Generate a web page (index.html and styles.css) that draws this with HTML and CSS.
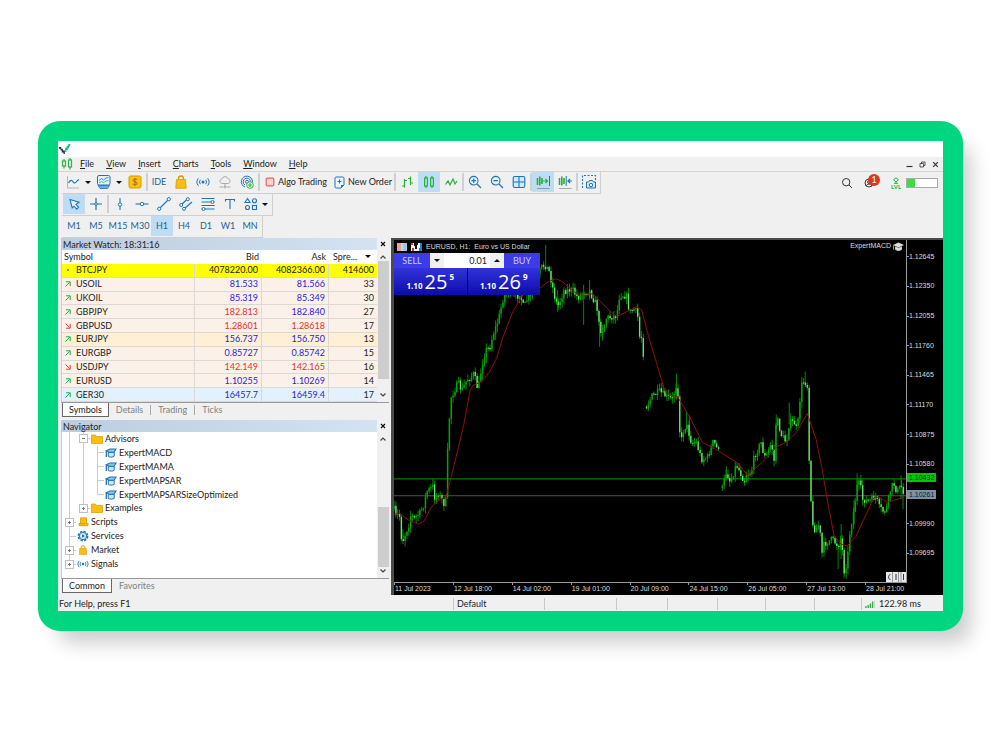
FILE: index.html
```
<!DOCTYPE html>
<html lang="en">
<head>
<meta charset="utf-8">
<meta name="viewport" content="width=device-width, initial-scale=1">
<title>Trading terminal</title>
<link rel="stylesheet" href="styles.css">
</head>
<body>
<svg class="sprite" aria-hidden="true">
  <symbol id="i-cap" viewBox="0 0 12 10"><path d="M3.200 4.500v3.800c2 1.200 4.300 1 6 0V4.500z" fill="#cfe6f7" stroke="#1f74b8"/><path d="M1.200 2.800 5 1h6L9 4.300H4z" fill="#8cc4ea" stroke="#1f74b8" stroke-width="1.100"/><path d="M1.300 3v6" stroke="#1f74b8" stroke-width="1.300"/></symbol>
  <symbol id="i-folder" viewBox="0 0 12 10"><path d="M.5 1h4l1 1.500h6V9.500H.5z" fill="#fac010" stroke="#d99a00" stroke-width=".7"/></symbol>
  <symbol id="i-bag" viewBox="0 0 14 14"><path d="M4.500 5V3.500a2.500 2.500 0 0 1 5 0V5" fill="none" stroke="#d99a00" stroke-width="1.300"/><path d="M2.500 4.500h9l.7 8.700H1.800z" fill="#fdbf0f" stroke="#d99a00" stroke-width=".8"/></symbol>
  <symbol id="i-signal" viewBox="0 0 14 14"><g fill="none" stroke="#1f74b8"><path d="M4.300 4.800a3.600 3.600 0 0 0 0 4.400M9.700 4.800a3.600 3.600 0 0 1 0 4.400M2.400 3.300a5.800 5.800 0 0 0 0 7.400M11.600 3.300a5.800 5.800 0 0 1 0 7.400"/></g><circle cx="7" cy="7" r="1.500" fill="#1f74b8"/></symbol>
  <symbol id="i-up" viewBox="0 0 8 8"><path d="M1.500 6.500 5.500 2.500M2 1.800h4.200V6" fill="none" stroke="#1ea84a"/></symbol>
  <symbol id="i-down" viewBox="0 0 8 8"><path d="M1.500 1.500 5.500 5.500M2 6.200h4.200V2" fill="none" stroke="#e23b36"/></symbol>
  <symbol id="i-chevup" viewBox="0 0 8 8"><path d="M1.500 5.500 4 3l2.500 2.500" fill="none" stroke="#444" stroke-width="1.200"/></symbol>
  <symbol id="i-chevdown" viewBox="0 0 8 8"><path d="M1.500 2.500 4 5l2.500-2.500" fill="none" stroke="#444" stroke-width="1.200"/></symbol>
  <symbol id="i-close" viewBox="0 0 8 8"><path d="M2 2l4 4M6 2 2 6" fill="none" stroke="#111" stroke-width="1.200"/></symbol>
</svg>

<main class="stage">
<div class="frame">
<div class="app">
  <header class="titlebar">
    <svg class="logo" width="14" height="14" viewBox="0 0 14 14"><path d="M1 6h2.200v1.700h1.600v1.800h2V13H5.500v-1.500H3.800V9.500H2.500V7.800H1z" fill="#13294b"/><path d="M7.200 11V6.500h1.600V4.800h1.500V3h1.900v2.500h-1.200v1.800H9.700V9H8.500v2z" fill="#10b981"/></svg>
  </header>

  <nav class="menubar">
    <svg class="menu-logo" width="12" height="12" viewBox="0 0 12 12"><g fill="none" stroke="#2fb344" stroke-width="1.200"><path d="M3 1v2M3 8v2.500M9 0v2M9 9v2.500"/><rect x="1.500" y="3" width="3" height="5"/><rect x="7.500" y="2" width="3" height="7"/></g></svg>
    <ul class="menu">
      <li><a href="#"><u>F</u>ile</a></li>
      <li><a href="#"><u>V</u>iew</a></li>
      <li><a href="#"><u>I</u>nsert</a></li>
      <li><a href="#"><u>C</u>harts</a></li>
      <li><a href="#"><u>T</u>ools</a></li>
      <li><a href="#"><u>W</u>indow</a></li>
      <li><a href="#"><u>H</u>elp</a></li>
    </ul>
    <div class="window-controls">
      <button aria-label="Minimize"><svg width="9" height="9" viewBox="0 0 9 9"><path d="M1.500 6.500h6" stroke="#333" stroke-width="1.200"/></svg></button>
      <button aria-label="Restore"><svg width="9" height="9" viewBox="0 0 9 9"><path d="M2 3.500h3.500V7H2zM3.500 3.500V2H7v3.500H5.500" fill="none" stroke="#333" stroke-width=".8"/></svg></button>
      <button aria-label="Close"><svg width="9" height="9" viewBox="0 0 9 9"><path d="M2.200 2.200l4.600 4.600M6.800 2.200 2.200 6.800" stroke="#333" stroke-width="1.200"/></svg></button>
    </div>
  </nav>

  <div class="toolbar-row">
    <div class="toolbar">
      <button class="tool drop" aria-label="Line chart"><svg width="16" height="16" viewBox="0 0 16 16"><path d="M2.500 2v12H14" fill="none" stroke="#b5b5b5"/><path d="M3.500 9c2-3.500 3.500-3 4.500-1.200s2.500 1.700 4.500-1.300l1.500-1" fill="none" stroke="#1f74b8" stroke-width="1.200"/></svg><i class="caret"></i></button>
      <button class="tool drop" aria-label="Indicators"><svg width="16" height="16" viewBox="0 0 16 16"><rect x="1.500" y="1.500" width="12.500" height="9.500" rx="1.500" fill="#e3f1fb" stroke="#1f74b8"/><path d="M3 6.500 5.500 4.500l2 1.500L10 4l2.500-.5" fill="none" stroke="#1f74b8" stroke-width=".8"/><path d="M3 9 5.500 7.500l2 1L10 7l2.500-.5" fill="none" stroke="#2fb344" stroke-width=".8"/><path d="M2 11.500 4 14.500h7.500l2-3z" fill="#6aaede" stroke="#1f74b8" stroke-width=".8"/></svg><i class="caret"></i></button>
      <button class="tool" aria-label="Market"><svg width="14" height="14" viewBox="0 0 14 14"><rect x="1" y="1" width="12" height="12" rx="1.500" fill="#fdc010" stroke="#d99a00"/><path d="M9.200 4.600c-.8-.9-4-.9-4 .8 0 1.900 4 1 4 3 0 1.700-3.300 1.700-4.300.6M7 3v8" fill="none" stroke="#a86f00"/></svg></button>
      <span class="sep"></span>
      <button class="tool text">IDE</button>
      <button class="tool" aria-label="Store"><svg width="14" height="14"><use href="#i-bag"/></svg></button>
      <button class="tool" aria-label="Signals"><svg width="14" height="14"><use href="#i-signal"/></svg></button>
      <button class="tool" aria-label="Cloud"><svg width="14" height="14" viewBox="0 0 14 14"><g fill="none" stroke="#aaa"><path d="M3.500 8.500a2.300 2.300 0 0 1 .2-4.400 3.500 3.500 0 0 1 6.600-.2 2.400 2.400 0 0 1 .2 4.600zM7 8.500v3M1.500 12h4M8.500 12h4"/><circle cx="7" cy="12" r="1"/></g></svg></button>
      <button class="tool" aria-label="Virtual hosting"><svg width="14" height="14" viewBox="0 0 14 14"><g fill="none" stroke="#1f74b8"><path d="M5 12A5.600 5.600 0 1 1 12.500 7"/><path d="M5 10A3.700 3.700 0 1 1 10.600 6.500"/><circle cx="7" cy="6.800" r="1.500"/></g><circle cx="10" cy="10" r="3.300" fill="#fff" stroke="#2fb344"/><path d="M8 10h4M10 8v4" stroke="#2fb344" stroke-width="1.200"/></svg></button>
      <span class="sep"></span>
      <button class="tool label algo"><svg width="10" height="10" viewBox="0 0 10 10"><rect x="1.200" y="1.200" width="7.600" height="7.600" rx="1" fill="#fbd3d3" stroke="#e06666" stroke-width="1.200"/></svg>Algo Trading</button>
      <button class="tool label order"><svg width="11" height="13" viewBox="0 0 11 13"><path d="M1 2.200C1 1.500 1.500 1 2.200 1h6.600c.7 0 1.200.5 1.200 1.200V9L7 12H2.200C1.500 12 1 11.500 1 10.800z" fill="#eaf5fd" stroke="#1f74b8"/><path d="M10 9H7v3z" fill="#1f74b8"/><path d="M5.500 3.500v4M3.500 5.500h4" stroke="#1f74b8"/></svg>New Order</button>
      <span class="sep"></span>
      <button class="tool" aria-label="Bar chart"><svg width="14" height="14" viewBox="0 0 14 14"><path d="M4.500 4v8.500M2 11h2.500M4.500 5.500H7M10.500 1.500V10M8 3.500h2.500M10.500 8H13" fill="none" stroke="#22b33c" stroke-width="1.200"/></svg></button>
      <button class="tool active" aria-label="Candlesticks"><svg width="14" height="14" viewBox="0 0 14 14"><g fill="none" stroke="#22b33c" stroke-width="1.200"><path d="M4 1v2M4 11v2M10 1v2M10 11v2"/><rect x="2.600" y="3" width="2.800" height="8"/><rect x="8.600" y="3" width="2.800" height="8"/></g></svg></button>
      <button class="tool" aria-label="Line"><svg width="14" height="14" viewBox="0 0 14 14"><path d="M1.500 9.500 4 6l2 4 3-6 2 5 2-3" fill="none" stroke="#22b33c" stroke-width="1.200"/></svg></button>
      <span class="sep"></span>
      <button class="tool" aria-label="Zoom in"><svg width="14" height="14" viewBox="0 0 14 14"><circle cx="5.700" cy="5.700" r="4.300" fill="#e3f1fb" stroke="#1f74b8" stroke-width="1.100"/><path d="M9 9l4 4M3.500 5.700h4.400M5.700 3.500v4.400" stroke="#1f74b8" stroke-width="1.200"/></svg></button>
      <button class="tool" aria-label="Zoom out"><svg width="14" height="14" viewBox="0 0 14 14"><circle cx="5.700" cy="5.700" r="4.300" fill="#e3f1fb" stroke="#1f74b8" stroke-width="1.100"/><path d="M9 9l4 4M3.500 5.700h4.400" stroke="#1f74b8" stroke-width="1.200"/></svg></button>
      <button class="tool" aria-label="Tile windows"><svg width="14" height="14" viewBox="0 0 14 14"><rect x="1.200" y="1.500" width="11.600" height="11" rx="1.500" fill="#cfe8fa" stroke="#1f74b8" stroke-width="1.100"/><path d="M7 1.500v11M1.200 7h11.600" stroke="#1f74b8" stroke-width="1.100"/></svg></button>
      <span class="sep"></span>
      <button class="tool active" aria-label="Auto scroll"><svg width="16" height="16" viewBox="0 0 16 16"><path d="M2.500 4v7M4.800 2.500v9M7 4v6" stroke="#22b33c" stroke-width="1.600"/><path d="M8 7h4M10.500 5l2 2-2 2" fill="none" stroke="#22b33c" stroke-width="1.200"/><path d="M14.500 2v10" stroke="#1f74b8"/><path d="M2 14.500h12.500" stroke="#999"/></svg></button>
      <button class="tool" aria-label="Chart shift"><svg width="16" height="16" viewBox="0 0 16 16"><path d="M2.500 4v7M4.800 2.500v9M7 4v6" stroke="#22b33c" stroke-width="1.600"/><path d="M9.200 2v10" stroke="#1f74b8"/><path d="M15 7h-4M13 5l-2 2 2 2" fill="none" stroke="#1f74b8" stroke-width="1.200"/><path d="M2 14.500h12.500" stroke="#aaa"/></svg></button>
      <span class="sep"></span>
      <button class="tool" aria-label="Screenshot"><svg width="16" height="16" viewBox="0 0 16 16"><path d="M1.500 14V1.500h13V6" fill="none" stroke="#1f74b8" stroke-width="1.100" stroke-dasharray="2 1.500"/><path d="M5.500 8h2l1-1.500h3l1 1.500h2v6h-9z" fill="#cfe8fa" stroke="#1f74b8"/><circle cx="10" cy="11" r="1.700" fill="#fff" stroke="#1f74b8"/></svg></button>
    </div>
    <div class="account">
      <button class="tool" aria-label="Search"><svg width="12" height="12" viewBox="0 0 12 12"><circle cx="5.200" cy="5.200" r="3.700" fill="none" stroke="#333"/><path d="M8 8l3 3" stroke="#333"/></svg></button>
      <button class="tool user" aria-label="Notifications: 1"><svg width="10" height="10" viewBox="0 0 10 10"><circle cx="5" cy="5" r="4" fill="none" stroke="#333"/><path d="M2 8c1-2.500 5-2.500 6 0" fill="none" stroke="#333"/><circle cx="5" cy="4" r="1.400" fill="none" stroke="#333"/></svg><span class="badge">1</span></button>
      <span class="level"><svg width="8" height="7" viewBox="0 0 8 7"><path d="M4 .8 6.500 2.800 4 4.800 1.500 2.800zM4 4.800V6.500M2 6.300h4" fill="none" stroke="#22b33c"/></svg>LVL</span>
      <div class="gauge" role="meter" aria-label="Level" aria-valuenow="28" aria-valuemin="0" aria-valuemax="100"><span style="width:28%"></span></div>
    </div>
  </div>

  <div class="toolbar-row plain">
    <div class="toolbar">
      <button class="tool active" aria-label="Cursor"><svg width="14" height="14" viewBox="0 0 14 14"><path d="M3 2.500l9 2.800-3 2 2.600 3-1.800 1.800-2.800-2.900L5.200 11z" fill="#e6f3fc" stroke="#1f74b8" stroke-width="1.100"/></svg></button>
      <button class="tool" aria-label="Crosshair"><svg width="14" height="14" viewBox="0 0 14 14"><path d="M7 1v12M1 7h12" stroke="#1f74b8" stroke-width="1.200"/><circle cx="7" cy="7" r="1.300" fill="#f0f0f0" stroke="#1f74b8"/></svg></button>
      <span class="sep"></span>
      <button class="tool" aria-label="Vertical line"><svg width="14" height="14" viewBox="0 0 14 14"><path d="M7 1v12" stroke="#1f74b8" stroke-width="1.100"/><circle cx="7" cy="7.500" r="1.700" fill="#fff" stroke="#1f74b8"/></svg></button>
      <button class="tool" aria-label="Horizontal line"><svg width="14" height="14" viewBox="0 0 14 14"><path d="M.5 7h13" stroke="#1f74b8" stroke-width="1.100"/><circle cx="7" cy="7" r="1.700" fill="#fff" stroke="#1f74b8"/></svg></button>
      <button class="tool" aria-label="Trend line"><svg width="14" height="14" viewBox="0 0 14 14"><path d="M2 12 12 2" stroke="#1f74b8" stroke-width="1.100"/><circle cx="2.200" cy="11.800" r="1.600" fill="#fff" stroke="#1f74b8"/><circle cx="11.800" cy="2.200" r="1.600" fill="#fff" stroke="#1f74b8"/></svg></button>
      <button class="tool" aria-label="Channel"><svg width="14" height="14" viewBox="0 0 14 14"><path d="M2 8 9 1.500M5 12l8-7" stroke="#1f74b8" stroke-width="1.100"/><circle cx="2.200" cy="8" r="1.500" fill="#fff" stroke="#1f74b8"/><circle cx="8.800" cy="2.200" r="1.500" fill="#fff" stroke="#1f74b8"/><circle cx="5" cy="11.800" r="1.500" fill="#fff" stroke="#1f74b8"/></svg></button>
      <button class="tool" aria-label="Fibonacci"><svg width="14" height="14" viewBox="0 0 14 14"><path d="M.5 1.500h13M.5 5h13M.5 8.500h13M.5 12h13" stroke="#1f74b8" stroke-width="1.100"/><circle cx="11.500" cy="5" r="1.500" fill="#fff" stroke="#1f74b8"/><circle cx="2.500" cy="12" r="1.500" fill="#fff" stroke="#1f74b8"/></svg></button>
      <button class="tool" aria-label="Text"><svg width="14" height="14" viewBox="0 0 14 14"><path d="M2.500 4.500v-2h9v2M7 2.500V12" fill="none" stroke="#1f74b8" stroke-width="1.100"/></svg></button>
      <button class="tool drop" aria-label="Shapes"><svg width="14" height="14" viewBox="0 0 14 14"><g fill="none" stroke="#1f74b8" stroke-width="1.100"><path d="M3.500 1.500 6 5.500H1z"/><circle cx="10.500" cy="3.700" r="2"/><circle cx="3.500" cy="10.500" r="2"/><rect x="8.500" y="8.500" width="4" height="4"/></g></svg><i class="caret"></i></button>
    </div>
  </div>

  <div class="toolbar-row plain">
    <div class="toolbar periods">
      <button class="tool text">M1</button><button class="tool text">M5</button><button class="tool text">M15</button><button class="tool text">M30</button><button class="tool text active">H1</button><button class="tool text">H4</button><button class="tool text">D1</button><button class="tool text">W1</button><button class="tool text">MN</button>
    </div>
  </div>

  <div class="workspace">
    <aside class="side">
      <section class="panel">
        <header class="panel-title"><h2>Market Watch: 18:31:16</h2><button aria-label="Close Market Watch"><svg width="8" height="8"><use href="#i-close"/></svg></button></header>
        <div class="panel-body">
          <table class="quotes">
            <thead><tr><th class="sym">Symbol</th><th>Bid</th><th>Ask</th><th class="spread">Spre...<i class="caret"></i></th></tr></thead>
            <tbody>
              <tr class="hot"><td><i class="dot"></i>BTCJPY</td><td>4078220.00</td><td>4082366.00</td><td>414600</td></tr>
              <tr><td><svg width="8" height="8"><use href="#i-up"/></svg>USOIL</td><td class="up">81.533</td><td class="up">81.566</td><td>33</td></tr>
              <tr><td><svg width="8" height="8"><use href="#i-up"/></svg>UKOIL</td><td class="up">85.319</td><td class="up">85.349</td><td>30</td></tr>
              <tr><td><svg width="8" height="8"><use href="#i-up"/></svg>GBPJPY</td><td class="down">182.813</td><td class="up">182.840</td><td>27</td></tr>
              <tr><td><svg width="8" height="8"><use href="#i-down"/></svg>GBPUSD</td><td class="down">1.28601</td><td class="down">1.28618</td><td>17</td></tr>
              <tr class="warm"><td><svg width="8" height="8"><use href="#i-up"/></svg>EURJPY</td><td class="up">156.737</td><td class="up">156.750</td><td>13</td></tr>
              <tr><td><svg width="8" height="8"><use href="#i-up"/></svg>EURGBP</td><td class="up">0.85727</td><td class="up">0.85742</td><td>15</td></tr>
              <tr><td><svg width="8" height="8"><use href="#i-down"/></svg>USDJPY</td><td class="down">142.149</td><td class="down">142.165</td><td>16</td></tr>
              <tr><td><svg width="8" height="8"><use href="#i-up"/></svg>EURUSD</td><td class="up">1.10255</td><td class="up">1.10269</td><td>14</td></tr>
              <tr class="cool"><td><svg width="8" height="8"><use href="#i-up"/></svg>GER30</td><td class="up">16457.7</td><td class="up">16459.4</td><td>17</td></tr>
            </tbody>
          </table>
          <div class="scroll market-scroll"><svg width="8" height="8"><use href="#i-chevup"/></svg><span class="thumb"></span><svg width="8" height="8"><use href="#i-chevdown"/></svg></div>
        </div>
        <div class="tabs"><button class="tab current">Symbols</button><button class="tab">Details</button><button class="tab">Trading</button><button class="tab">Ticks</button></div>
      </section>

      <section class="panel">
        <header class="panel-title"><h2>Navigator</h2><button aria-label="Close Navigator"><svg width="8" height="8"><use href="#i-close"/></svg></button></header>
        <div class="panel-body">
          <ul class="tree">
            <li><i class="g line"></i><i class="g tee box minus"></i><svg width="12" height="10"><use href="#i-folder"/></svg>Advisors</li>
            <li><i class="g line"></i><i class="g line"></i><i class="g tee"></i><svg width="12" height="10"><use href="#i-cap"/></svg>ExpertMACD</li>
            <li><i class="g line"></i><i class="g line"></i><i class="g tee"></i><svg width="12" height="10"><use href="#i-cap"/></svg>ExpertMAMA</li>
            <li><i class="g line"></i><i class="g line"></i><i class="g tee"></i><svg width="12" height="10"><use href="#i-cap"/></svg>ExpertMAPSAR</li>
            <li><i class="g line"></i><i class="g line"></i><i class="g tee last"></i><svg width="12" height="10"><use href="#i-cap"/></svg>ExpertMAPSARSizeOptimized</li>
            <li><i class="g line"></i><i class="g tee last box"></i><svg width="12" height="10"><use href="#i-folder"/></svg>Examples</li>
            <li><i class="g tee box"></i><svg width="12" height="10" viewBox="0 0 12 10"><path d="M3.500.8h6v5.700H11v2.200H2V6.500h1.500z" fill="#fdbf0f" stroke="#d99a00" stroke-width=".8"/><path d="M2 6.700h6.500" stroke="#d99a00"/></svg>Scripts</li>
            <li><i class="g tee"></i><svg width="12" height="12" viewBox="0 0 12 12"><circle cx="6" cy="6" r="4.600" fill="none" stroke="#1f74b8" stroke-width="1.600" stroke-dasharray="2.400 1.200"/><circle cx="6" cy="6" r="3.700" fill="#d6ebfa" stroke="#1f74b8"/><path d="M5 4.200 8 6 5 7.800z" fill="#1f74b8"/></svg>Services</li>
            <li><i class="g tee box"></i><svg width="12" height="10"><use href="#i-bag"/></svg>Market</li>
            <li><i class="g tee last box"></i><svg width="12" height="12"><use href="#i-signal"/></svg>Signals</li>
          </ul>
          <div class="scroll nav-scroll"><svg width="8" height="8"><use href="#i-chevup"/></svg><span class="thumb"></span><svg width="8" height="8"><use href="#i-chevdown"/></svg></div>
        </div>
        <div class="tabs"><button class="tab current">Common</button><button class="tab">Favorites</button></div>
      </section>
    </aside>

    <section class="chart" aria-label="EURUSD, H1">
      <div class="plot">
        <svg class="series" viewBox="394 240 513 343" preserveAspectRatio="none">
          <path d="M394 479.500h513" stroke="#007c00" stroke-width="1.200"/>
          <path d="M394 496.500h513" stroke="#505254" stroke-width="1.200"/>
          <path id="wicks" stroke="#009800" stroke-width=".9" fill="none"/>
          <path id="rising" stroke="#0aa00a" stroke-width="1.500" fill="none"/>
          <path id="falling" stroke="#6fdc6f" stroke-width="1.400" fill="none"/>
          <path id="average" stroke="#8e1208" stroke-width="1" fill="none" stroke-linejoin="round"/>
        </svg>
        <div class="chart-head">
          <svg width="10" height="8" viewBox="0 0 10 8"><rect width="10" height="8" fill="#eee"/><path d="M0 1h4.500M0 3h4.500M0 5h4.500M0 7h4.500" stroke="#d8574c" stroke-width="1"/><path d="M5.500 1H10M5.500 3H10M5.500 5H10M5.500 7H10" stroke="#5a9fd0"/></svg>
          <svg width="11" height="8" viewBox="0 0 11 8"><rect width="11" height="8" fill="#f4f4f4"/><path d="M0 0h2v2H0zM1 5h2v3H1z" fill="#c33"/><path d="M3 0h4v2H6v4H4V3H3z" fill="#111"/><path d="M9 0h2v8H8V5h1z" fill="#2a7ab8"/></svg>
          <span>EURUSD, H1:&nbsp; Euro vs US Dollar</span>
          <span class="expert">ExpertMACD<svg width="11" height="9" viewBox="0 0 11 9"><path d="M0 3 5.500.5 11 3 5.500 5.500z" fill="#ddd"/><path d="M2.500 4.800v2.700c2 1.200 4 1.200 6 0V4.800l-3 1.500zM.6 3.500v4" fill="#ddd" stroke="#ddd" stroke-width=".8"/></svg></span>
        </div>
        <form class="deal">
          <div class="deal-top">
            <span class="side-name">SELL</span>
            <div class="lots"><button type="button" aria-label="Less"><i class="caret"></i></button><input aria-label="Volume" value="0.01"><button type="button" aria-label="More"><i class="caret flip"></i></button></div>
            <span class="side-name">BUY</span>
          </div>
          <div class="deal-prices">
            <button type="button" aria-label="Sell at 1.10255"><small>1.10</small><b>25</b><sup>5</sup></button>
            <button type="button" aria-label="Buy at 1.10269"><small>1.10</small><b>26</b><sup>9</sup></button>
          </div>
        </form>
        <svg class="stamp" width="20" height="10" viewBox="0 0 20 10"><rect width="20" height="10" fill="#e8e8e8"/><path d="M4.500 2.500a2 2.500 0 1 0 0 5" fill="none" stroke="#457" stroke-width="1"/><path d="M6.500 0v10M12.500 0v10M15 0v10" stroke="#999"/><path d="M10 2v6M17.500 2v6" stroke="#333"/></svg>
      </div>
      <div class="prices">
        <span>1.12645</span><span>1.12350</span><span>1.12055</span><span>1.11760</span><span>1.11465</span><span>1.11170</span><span>1.10875</span><span>1.10580</span><span>1.10285</span><span>1.09990</span><span>1.09695</span>
        <output class="mark order-mark">1.10432</output>
        <output class="mark bid-mark">1.10261</output>
      </div>
      <div class="times">
        <span>11 Jul 2023</span><span>12 Jul 18:00</span><span>14 Jul 02:00</span><span>19 Jul 01:00</span><span>20 Jul 09:00</span><span>24 Jul 15:00</span><span>26 Jul 05:00</span><span>27 Jul 13:00</span><span>28 Jul 21:00</span>
      </div>
    </section>
  </div>

  <footer class="status">
    <span class="help">For Help, press F1</span>
    <span class="profile">Default</span>
    <span></span><span></span><span></span><span></span><span></span><span></span>
    <span class="ping"><svg width="10" height="8" viewBox="0 0 10 8"><path d="M1 6v2M3.200 5v3M5.400 3.500V8M7.600 1.500V8" stroke="#2fb344" stroke-width="1.400"/><path d="M9.500 1v7" stroke="#9c9" stroke-width=".6"/></svg>122.98 ms</span>
  </footer>
</div>
</div>
</main>
<script src="chart.js"></script>
</body>
</html>
```

FILE: styles.css
```
* { box-sizing: border-box; }

body {
  margin: 0;
  background: #fff;
  color: #222;
  font: 9px/12px Lato, "Open Sans", sans-serif;
}

button {
  margin: 0;
  padding: 0;
  border: 0;
  background: none;
  color: inherit;
  font: inherit;
  white-space: nowrap;
}

ul { margin: 0; padding: 0; list-style: none; }
a { color: inherit; text-decoration: none; }
svg { display: block; flex: none; }
.sprite { display: none; }

.stage { padding: 121px 38px; }

.frame {
  padding: 20px;
  border-radius: 22px;
  background: #00d67f;
  box-shadow: 14px 18px 20px -6px rgba(0, 0, 0, .2);
}

.app {
  display: flex;
  flex-direction: column;
  background: #f0f0f0;
}

.caret {
  flex: none;
  width: 0;
  height: 0;
  border: 3px solid transparent;
  border-top-color: #111;
  border-bottom: 0;
}

.caret.flip {
  border-top: 0;
  border-bottom: 3px solid #111;
}

/* title and menu */
.titlebar { height: 16px; background: #fff; }

.menubar {
  display: flex;
  align-items: center;
  height: 15px;
  padding: 0 3px;
  border-bottom: 1px solid #d4d4d4;
}

.menu { display: flex; gap: 12px; margin-left: 7px; }
.window-controls { display: flex; gap: 4px; margin-left: auto; }

/* toolbars */
.toolbar-row {
  display: flex;
  justify-content: space-between;
  height: 22px;
  padding-left: 4px;
}

.toolbar {
  display: flex;
  border-right: 1px solid #cfcfcf;
  border-bottom: 1px solid #cfcfcf;
}

.plain .toolbar { padding-left: 1px; }
.periods { padding-right: 1px; }

.tool {
  position: relative;
  display: flex;
  align-items: center;
  justify-content: center;
  width: 22px;
  height: 20px;
}

.tool.active { background: #bfdcf5; }
.tool.text { color: #1c5f96; }
.tool.drop { justify-content: flex-start; gap: 4px; width: 31px; padding-left: 3px; }
.tool.label { justify-content: flex-start; gap: 3px; padding-left: 5px; }
.tool.algo { width: 73px; }
.tool.order { width: 61px; padding-left: 1px; }

.sep {
  width: 2px;
  height: 18px;
  margin-top: 1px;
  background: #d0d0d0;
}

.account {
  display: flex;
  align-items: center;
  padding-right: 5px;
}

.badge {
  position: absolute;
  top: 1px;
  right: 0;
  width: 12px;
  height: 12px;
  border-radius: 50%;
  background: #d93a20;
  color: #fff;
  text-align: center;
}

.level {
  display: flex;
  flex-direction: column;
  align-items: center;
  margin: 0 5px 0 11px;
  color: #22b33c;
  font-size: 6px;
  font-weight: 700;
  line-height: 6px;
}

.gauge {
  width: 32px;
  height: 10px;
  border: 1px solid #aaa;
  background: #fff;
}

.gauge span { display: block; height: 100%; background: #3fdc3f; }

/* workspace */
.workspace { display: flex; }

.side {
  display: flex;
  flex: none;
  flex-direction: column;
  gap: 3px;
  width: 333px;
  padding: 0 2px 2px 3px;
}

.panel-title {
  display: flex;
  align-items: center;
  justify-content: space-between;
  height: 12px;
  background: linear-gradient(90deg, #bccddf, #d5e3f2);
}

.panel-title h2 {
  margin: 0 0 0 2px;
  font-size: 9px;
  font-weight: 400;
  line-height: 11px;
}

.panel-title button { padding: 2px; background: #f0f0f0; }

.panel-body {
  display: flex;
  border-left: 1px solid #ccc;
  border-bottom: 1px solid #999;
  background: #fff;
}

.quotes {
  flex: 1;
  height: 152px;
  border-collapse: separate;
  border-spacing: 0;
  table-layout: fixed;
}

.quotes th {
  width: 67px;
  height: 14px;
  padding: 0 3px 0 0;
  font-weight: 400;
  line-height: 10px;
  text-align: right;
  white-space: nowrap;
}

.quotes .sym { width: 133px; padding-left: 2px; text-align: left; }
.quotes .spread { width: 48px; padding-right: 0; padding-left: 4px; text-align: left; }
.spread .caret { display: inline-block; margin: 0 0 2px 8px; }

.quotes td {
  padding: 0 3px 0 0;
  border-right: 1px solid #ddd8d4;
  border-bottom: 1px solid #ddd8d4;
  background: #fbf1e8;
  line-height: 10px;
  text-align: right;
}

.quotes td:first-child { padding-left: 14px; text-align: left; }
.quotes td:last-child { border-right: 0; }
.quotes td svg { float: left; margin: 1px 0 0 -12px; }
.quotes .hot td { background: #ff0; }
.quotes .warm td { background: #ffefd5; }
.quotes .cool td { background: #e2f1fd; }
.quotes .up { color: #2b22dd; }
.quotes .down { color: #e8302c; }

.dot {
  float: left;
  width: 2px;
  height: 2px;
  margin: 4px 0 0 -9px;
  background: #a80;
}

.scroll {
  display: flex;
  flex-direction: column;
  align-items: center;
  justify-content: space-between;
  width: 12px;
  padding: 3px 0;
  background: #f0f0f0;
}

.thumb { width: 11px; background: #cdcdcd; }
.market-scroll .thumb { height: 118px; margin: 0 0 auto; }
.nav-scroll .thumb { height: 60px; margin: auto 0 0; }

.tabs { display: flex; height: 14px; padding-left: 1px; }

.tab {
  margin: 2px 0;
  padding: 0 7px;
  border-right: 1px solid #aaa;
  color: #808080;
  line-height: 10px;
}

.tab:last-child { border-right: 0; }

.tab.current {
  margin: 0;
  padding: 0 6px;
  border: 1px solid #666;
  border-top: 0;
  background: #fff;
  color: #222;
}

/* navigator tree */
.tree {
  display: grid;
  flex: 1;
  grid-auto-rows: 1fr;
  height: 146px;
  padding-bottom: 7px;
}

.tree li { display: flex; align-items: center; }
.tree svg { margin: 0 2px 0 1px; }

.g {
  position: relative;
  align-self: stretch;
  width: 14px;
  background:
    linear-gradient(#ccc, #ccc) 7px 0 / 1px 100% no-repeat;
}

.g.tee {
  background:
    linear-gradient(#ccc, #ccc) 7px 0 / 1px 100% no-repeat,
    linear-gradient(#ccc, #ccc) 7px 50% / 7px 1px no-repeat;
}

.g.last {
  background:
    linear-gradient(#ccc, #ccc) 7px 0 / 1px 50% no-repeat,
    linear-gradient(#ccc, #ccc) 7px 50% / 7px 1px no-repeat;
}

.g.box { display: grid; place-items: center; }

.g.box::after {
  content: "";
  width: 7px;
  height: 7px;
  margin-left: 1px;
  border: 1px solid #b9c2cc;
  background:
    linear-gradient(#678, #678) 50% 50% / 3px 1px no-repeat,
    linear-gradient(#678, #678) 50% 50% / 1px 3px no-repeat,
    #fff;
}

.g.minus::after { background: linear-gradient(#678, #678) 50% 50% / 3px 1px no-repeat, #fff; }

/* chart */
.chart {
  display: grid;
  flex: 1;
  grid-template: 1fr 12px / 1fr 36px;
  min-width: 0;
  border-top: 2px solid #4a4c4e;
  border-left: 3px solid #4a4c4e;
  background: #000;
  color: #ddd;
  font: 7px/8px "Liberation Sans", Arial, sans-serif;
}

.plot {
  position: relative;
  min-height: 0;
  border-right: 1px solid #999;
  border-bottom: 1px solid #999;
}

.series { position: absolute; inset: 0; width: 100%; height: 100%; }

.chart-head {
  position: relative;
  display: flex;
  align-items: center;
  gap: 4px;
  padding: 2px 2px 2px 3px;
}

.chart-head span { white-space: pre; }
.chart-head .expert { display: flex; gap: 2px; margin-left: auto; }

.deal {
  position: relative;
  width: 146px;
  color: #fff;
  font-family: "Open Sans", "Noto Sans", sans-serif;
}

.deal-top {
  display: grid;
  grid-template-columns: 36px 74px 1fr;
  height: 15px;
  background: #3c3ce6;
}

.side-name { color: #c8ccff; font: 9px/15px Lato, "Open Sans", sans-serif; text-align: center; }

.lots { display: flex; background: #fff; color: #222; }
.lots button { display: grid; width: 14px; place-items: center; background: #f0f0f0; }

.lots input {
  flex: 1;
  min-width: 0;
  padding: 0 3px;
  border: 0;
  background: #fff;
  color: #222;
  font: 9px/14px Lato, "Open Sans", sans-serif;
  text-align: right;
}

.deal-prices { display: grid; grid-template-columns: 1fr 1fr; gap: 1px; }

.deal-prices button {
  display: flex;
  align-items: baseline;
  justify-content: center;
  gap: 2px;
  height: 27px;
  background: linear-gradient(#3232dc, #0c0cac);
  color: #fff;
}

.deal-prices small { font-size: 8px; font-weight: 700; }
.deal-prices b { font-size: 20px; font-weight: 400; line-height: 27px; }
.deal-prices sup { align-self: flex-start; font-size: 8px; font-weight: 700; line-height: 18px; }

.stamp { position: absolute; right: 0; bottom: 0; }

.prices {
  position: relative;
  display: grid;
  grid-auto-rows: 1fr;
  align-items: center;
  padding: 2px 0 15px;
}

.prices span { display: flex; align-items: center; }
.prices span::before { content: ""; width: 2px; height: 1px; background: #999; }

.mark {
  position: absolute;
  left: 0;
  width: 29px;
  padding-left: 2px;
  color: #022;
  line-height: 9px;
}

.order-mark { top: 68%; background: #00c800; }
.bid-mark { top: 73%; background: #8090a4; }

.times {
  display: grid;
  grid-column: 1 / -1;
  grid-template-columns: repeat(9, 1fr);
  padding-right: 19px;
}

.times span { border-left: 1px solid #999; height: 2px; padding-top: 2px; white-space: nowrap; }

/* status bar */
.status {
  display: grid;
  grid-template-columns: 395px 91px 72px 51px 50px 48px 49px 47px 1fr;
  align-items: center;
  height: 16px;
  padding-top: 2px;
}

.status span { height: 12px; padding-left: 3px; border-left: 1px solid #c8c8c8; white-space: nowrap; }
.status .help { padding-left: 1px; border: 0; }
.status .ping { display: flex; align-items: center; gap: 4px; }
```

FILE: chart.js
```
// Closing levels of each session as [x, y]; a new session starts after a gap.
const sessions = [
  [[394,510],[396,518],[399,514],[400,520],[401,537],[403,541],[406,533],[409,525],[411,515],[414,520],[417,516],[420,514],[424,505],[427,492],[431,489],[433,487],[435,500],[438,493],[441,499],[445,506],[446,500],[447,465],[449,425],[451,398],[455,390],[458,383],[462,391],[467,380],[470,378],[474,374],[478,390],[480,380],[482,365],[486,350],[490,348],[493,335],[497,325],[499,318],[503,300],[507,290],[512,296],[518,296],[520,293],[524,308],[528,298],[532,296],[536,285],[541,268],[545,265],[549,270],[552,283],[555,297],[558,307],[562,297],[564,291],[573,290],[578,298],[584,292],[590,291],[593,298],[597,305],[600,330],[603,330],[607,318],[617,316],[620,295],[627,296],[630,313],[635,309],[638,315],[640,337],[643,338],[645,380]],
  [[647,407],[652,397],[660,392],[667,397],[673,400],[677,385],[679,397],[681,450],[683,433],[687,425],[692,443],[697,443],[702,460],[708,458],[714,442],[718,450],[721,443]],
  [[723,489],[727,472],[731,483],[737,465],[745,482],[747,475],[752,473],[755,457],[762,443],[765,458],[768,455],[772,443],[775,463],[777,417],[782,435],[787,443],[790,423],[795,423],[798,432],[801,397],[803,382],[808,383],[810,460],[813,528],[816,530],[820,525],[823,555],[825,545],[833,540],[839,547],[842,537],[845,572],[848,563],[851,530],[855,510],[858,487],[861,483],[863,500],[870,502],[877,497],[880,508],[885,513],[888,507],[892,488],[895,485],[898,493],[902,486],[905,497]]
];

// Long shadows that stand out of the ordinary range: [x, top, bottom].
const spikes = [[403,530,545],[546,245,268],[558,290,312],[584,285,325],[590,280,300],[600,320,347],[603,325,341],[677,374,400],[687,412,430],[690,416,440],[727,467,478],[777,415,430],[790,403,425],[806,372,385],[842,525,560],[839,545,570],[845,560,579],[855,500,525],[858,474,492],[902,476,500],[904,490,510]];

const average = [[394,515],[399,514],[409,521],[418,525],[424,522],[432,507],[440,500],[446,498],[452,475],[464,425],[470,392],[473,386],[482,382],[490,372],[497,358],[503,338],[513,312],[523,295],[540,288],[550,281],[557,279],[563,282],[577,294],[593,294],[607,308],[617,317],[623,314],[637,307],[642,310],[650,340],[665,390],[668,395],[678,397],[690,417],[703,443],[720,452],[740,465],[748,476],[763,463],[778,447],[787,443],[798,432],[808,414],[817,440],[823,470],[828,500],[835,537],[842,545],[848,547],[857,537],[868,513],[875,498],[880,498],[888,503],[905,498]];

let seed = 7;
const random = () => (seed = (seed * 16807) % 2147483647) / 2147483647;

function levelAt(points, x) {
  for (let i = 1; i < points.length; i++) {
    const [x0, y0] = points[i - 1];
    const [x1, y1] = points[i];
    if (x <= x1) return y0 + (y1 - y0) * (x - x0) / (x1 - x0);
  }
  return points[points.length - 1][1];
}

let wicks = spikes.map(([x, a, b]) => `M${x} ${a}V${b}`).join("");
let rising = "";
let falling = "";

for (const points of sessions) {
  const end = points[points.length - 1][0];
  let open = points[0][1];
  for (let x = points[0][0]; x <= end; x += 1.85) {
    const close = levelAt(points, x) + (random() - 0.5) * 7;
    const top = Math.min(open, close);
    const bottom = Math.max(open, close, top + 1);
    const px = x.toFixed(1);
    wicks += `M${px} ${(top - random() * 6).toFixed(1)}V${(bottom + random() * 6).toFixed(1)}`;
    const body = `M${px} ${top.toFixed(1)}V${bottom.toFixed(1)}`;
    if (close > open) falling += body; else rising += body;
    open = close;
  }
}

document.getElementById("wicks").setAttribute("d", wicks);
document.getElementById("rising").setAttribute("d", rising);
document.getElementById("falling").setAttribute("d", falling);
document.getElementById("average").setAttribute("d", "M" + average.map(p => p.join(" ")).join("L"));
```
